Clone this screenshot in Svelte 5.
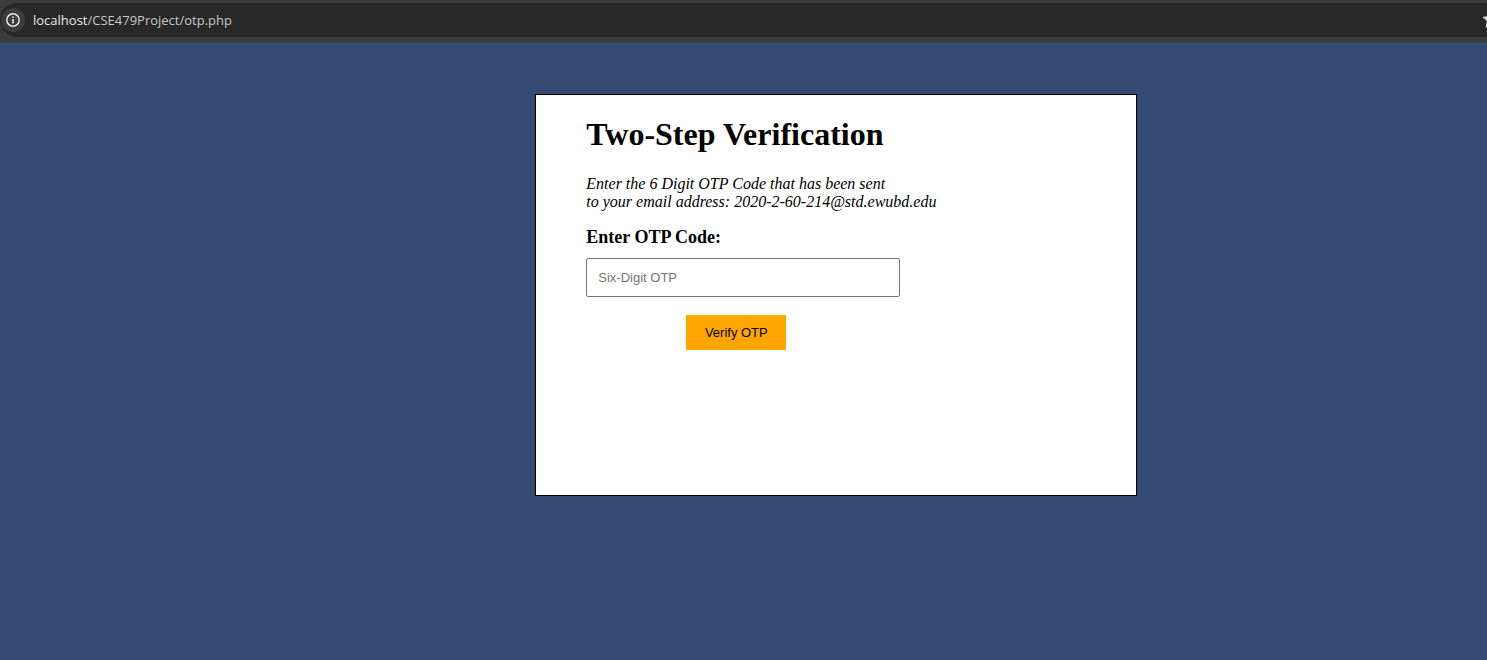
<script>
  let code = $state('');
  const email = '2020-2-60-214@std.ewubd.edu';
</script>

<div class="screen">
  <header class="toolbar">
    <div class="address">
      <button class="info" type="button" aria-label="View site information">
        <svg width="14" height="14" viewBox="0 0 14 14" fill="none" stroke="#e3e3e3">
          <circle cx="7" cy="7" r="6.2" stroke-width="1.5" />
          <path d="M7 6.1V10.6M7 3.4V5" stroke-width="1.6" />
        </svg>
      </button>
      <span class="url"><span class="host">localhost</span>/CSE479Project/otp.php</span>
      <button class="star" type="button" aria-label="Bookmark this page">
        <svg width="16" height="16" viewBox="0 0 16 16" fill="none" stroke="#dedede" stroke-width="1.8">
          <path d="M8 .8 9.9 5 14.8 5.5 11.2 8.8 12.2 14.2 8 11.8 3.8 14.2 4.8 8.8 1.2 5.5 6.1 5Z" />
        </svg>
      </button>
    </div>
  </header>

  <main>
    <form class="card" onsubmit={(e) => e.preventDefault()}>
      <h1>Two-Step Verification</h1>
      <p>Enter the 6 Digit OTP Code that has been sent<br />to your email address: {email}</p>
      <label for="otp">Enter OTP Code:</label>
      <input id="otp" type="text" placeholder="Six-Digit OTP" bind:value={code} />
      <button class="verify" type="submit">Verify OTP</button>
    </form>
  </main>
</div>

<style>
  :global(body) {
    background: #354a73;
  }

  .screen {
    display: flex;
    flex-direction: column;
    min-height: 100vh;
    overflow: hidden;
    font-family: "Liberation Serif", "Times New Roman", serif;
    color: #000;
  }

  .toolbar {
    padding: 3px 0 5px;
    background: #3c3c3c;
    border-bottom: 1px solid #3a4256;
  }

  .address {
    display: flex;
    align-items: center;
    height: 34px;
    margin-right: -12px;
    padding-left: 1px;
    border-radius: 17px 0 0 17px;
    background: #282828;
  }

  .info,
  .star {
    display: flex;
    align-items: center;
    justify-content: center;
    flex: none;
    width: 24px;
    height: 24px;
    padding: 0;
    border: 0;
    border-radius: 50%;
    background: #3c3c3c;
  }

  .star {
    width: 16px;
    margin-left: auto;
    border-radius: 0;
    background: none;
  }

  .url {
    margin-left: 8px;
    font: 13px/20px "Open Sans", "Noto Sans", sans-serif;
    color: #c7c7c7;
  }

  .host {
    color: #e8e8e8;
  }

  main {
    flex: 1;
    padding: 51px 0 51px 36%;
    background: #354a73;
  }

  .card {
    display: flex;
    flex-direction: column;
    align-items: flex-start;
    box-sizing: border-box;
    width: 100%;
    max-width: 602px;
    min-height: 402px;
    padding: 21px 50px;
    border: 1px solid #000;
    background: #fff;
  }

  h1 {
    margin: 0 0 22px;
    font-size: 32px;
    line-height: 37px;
  }

  p {
    margin: 0 0 16px;
    font-size: 16px;
    line-height: 18px;
    font-style: italic;
  }

  label {
    margin-bottom: 11px;
    font-size: 18px;
    line-height: 20px;
    font-weight: bold;
  }

  input {
    box-sizing: border-box;
    width: 314px;
    max-width: 100%;
    height: 39px;
    margin: 0 0 18px;
    padding: 0 11px;
    border: 1px solid #767676;
    border-radius: 2px;
    background: #fff;
    font: 13px "Liberation Sans", Arial, sans-serif;
  }

  input::placeholder {
    color: #757575;
  }

  .verify {
    width: 100px;
    height: 35px;
    margin: 0 0 0 100px;
    padding: 0;
    border: 0;
    background: #ffa500;
    color: #000;
    font: 13px "Liberation Sans", Arial, sans-serif;
  }
</style>
